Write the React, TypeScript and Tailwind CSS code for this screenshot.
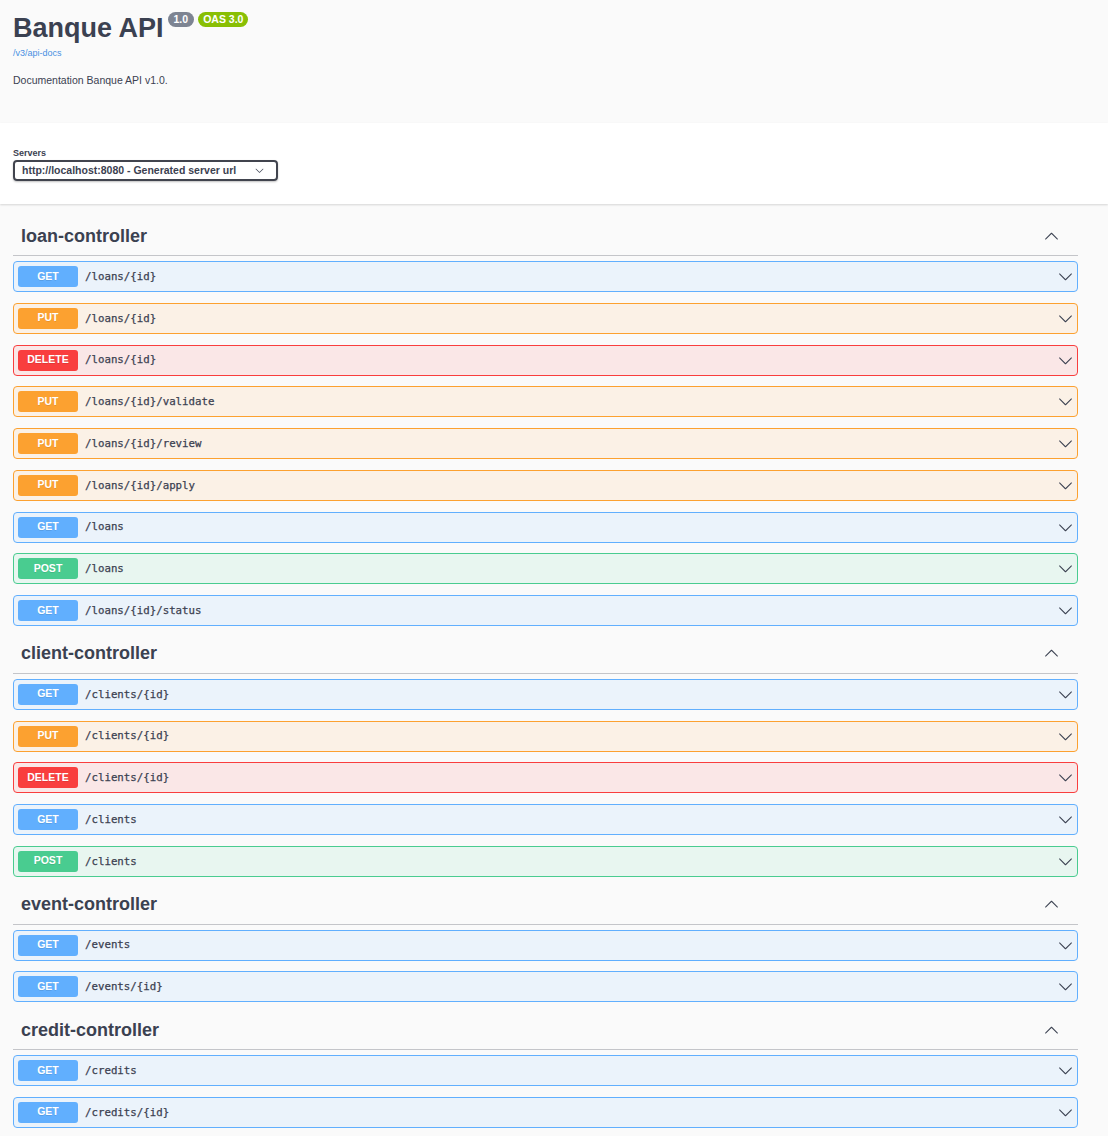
type Method = "GET" | "PUT" | "DELETE" | "POST";

const methodStyles: Record<Method, { row: string; badge: string }> = {
  GET: { row: "border-[#61affe] bg-[#ebf3fb]", badge: "bg-[#61affe]" },
  PUT: { row: "border-[#fca130] bg-[#fbf1e6]", badge: "bg-[#fca130]" },
  DELETE: { row: "border-[#f93e3e] bg-[#fae7e7]", badge: "bg-[#f93e3e]" },
  POST: { row: "border-[#49cc90] bg-[#e8f6f0]", badge: "bg-[#49cc90]" },
};

const sections: { name: string; ops: [Method, string][] }[] = [
  {
    name: "loan-controller",
    ops: [
      ["GET", "/loans/{id}"],
      ["PUT", "/loans/{id}"],
      ["DELETE", "/loans/{id}"],
      ["PUT", "/loans/{id}/validate"],
      ["PUT", "/loans/{id}/review"],
      ["PUT", "/loans/{id}/apply"],
      ["GET", "/loans"],
      ["POST", "/loans"],
      ["GET", "/loans/{id}/status"],
    ],
  },
  {
    name: "client-controller",
    ops: [
      ["GET", "/clients/{id}"],
      ["PUT", "/clients/{id}"],
      ["DELETE", "/clients/{id}"],
      ["GET", "/clients"],
      ["POST", "/clients"],
    ],
  },
  {
    name: "event-controller",
    ops: [
      ["GET", "/events"],
      ["GET", "/events/{id}"],
    ],
  },
  {
    name: "credit-controller",
    ops: [
      ["GET", "/credits"],
      ["GET", "/credits/{id}"],
    ],
  },
];

const Arrow = ({ up = false }: { up?: boolean }) => (
  <svg viewBox="0 0 20 20" className={`h-[15px] w-[15px] fill-[#3b4151] ${up ? "rotate-180" : ""}`}>
    <path d="M17.418 6.109c.272-.268.709-.268.979 0s.271.701 0 .969l-7.908 7.83c-.27.268-.707.268-.979 0l-7.908-7.83c-.27-.268-.27-.701 0-.969.271-.268.709-.268.979 0L10 13.25l7.418-7.141z" />
  </svg>
);

const OpRow = ({ method, path }: { method: Method; path: string }) => (
  <div className={`mb-[10.75px] flex h-[31px] items-center rounded-[4px] border pl-[4px] pr-[4px] ${methodStyles[method].row}`}>
    <span
      className={`flex h-[21px] w-[60px] items-center justify-center rounded-[3px] text-[10.5px] font-bold text-white [text-shadow:0_1px_0_rgba(0,0,0,0.1)] ${methodStyles[method].badge}`}
    >
      {method}
    </span>
    <span className="ml-[7px] mt-[1px] font-['DejaVu_Sans_Mono',monospace] text-[10.75px] text-[#3b4151] [-webkit-text-stroke:0.25px_#3b4151]">
      {path}
    </span>
    <span className="ml-auto">
      <Arrow />
    </span>
  </div>
);

export default function App() {
  return (
    <div className="min-h-screen bg-[#fafafa] font-['Liberation_Sans',Arial,sans-serif] text-[#3b4151]">
      <div className="h-[123px] px-[13px] pt-[11px]">
        <div className="flex items-start">
          <h1 className="mt-[4px] text-[27px] font-bold leading-[27px]">Banque API</h1>
          <span className="ml-[4px] mt-[1px] rounded-full bg-[#7d8492] px-[6px] text-[10.5px] font-bold leading-[15px] text-white">1.0</span>
          <span className="ml-[4px] mt-[1px] rounded-full bg-[#89bf04] px-[5px] text-[10.5px] font-bold leading-[15px] text-white">OAS 3.0</span>
        </div>
        <div className="mt-[6px] text-[9px] leading-[11px] text-[#4990e2]">/v3/api-docs</div>
        <div className="mt-[14px] text-[10.5px] leading-[14px]">Documentation Banque API v1.0.</div>
      </div>

      <div className="h-[81px] bg-white px-[13px] pt-[25px] shadow-[0_1px_2px_rgba(0,0,0,0.15)]">
        <div className="text-[9px] font-bold leading-[11px]">Servers</div>
        <div className="mt-[1px] flex h-[21px] w-[265px] items-center rounded-[4px] border-2 border-[#41444e] pl-[7px] pr-[12px] text-[10.5px] font-bold shadow-[0_1px_2px_rgba(0,0,0,0.25)]">
          <span>http://localhost:8080 - Generated server url</span>
          <svg viewBox="0 0 20 20" className="ml-auto h-[9px] w-[9px] fill-[#3b4151]">
            <path d="M17.418 6.109c.272-.268.709-.268.979 0s.271.701 0 .969l-7.908 7.83c-.27.268-.707.268-.979 0l-7.908-7.83c-.27-.268-.27-.701 0-.969.271-.268.709-.268.979 0L10 13.25l7.418-7.141z" />
          </svg>
        </div>
      </div>

      <div className="pl-[13px] pr-[30px] pt-[15px]">
        {sections.map((s) => (
          <div key={s.name}>
            <div className="mb-[5px] flex h-[37px] items-center border-b border-[#c4c5c9] pb-[2px] pl-[8px] pr-[19px]">
              <h3 className="text-[18px] font-bold">{s.name}</h3>
              <span className="ml-auto">
                <Arrow up />
              </span>
            </div>
            {s.ops.map(([m, p], i) => (
              <OpRow key={i} method={m} path={p} />
            ))}
          </div>
        ))}
      </div>
    </div>
  );
}
